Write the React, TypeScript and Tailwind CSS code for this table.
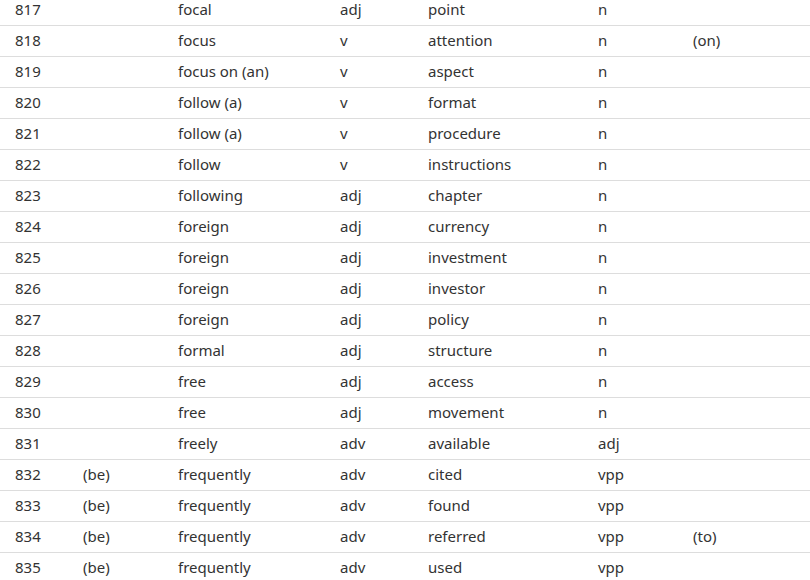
import React from "react"

type Row = [number, string, string, string, string, string, string]

const rows: Row[] = [
  [817, "", "focal", "adj", "point", "n", ""],
  [818, "", "focus", "v", "attention", "n", "(on)"],
  [819, "", "focus on (an)", "v", "aspect", "n", ""],
  [820, "", "follow (a)", "v", "format", "n", ""],
  [821, "", "follow (a)", "v", "procedure", "n", ""],
  [822, "", "follow", "v", "instructions", "n", ""],
  [823, "", "following", "adj", "chapter", "n", ""],
  [824, "", "foreign", "adj", "currency", "n", ""],
  [825, "", "foreign", "adj", "investment", "n", ""],
  [826, "", "foreign", "adj", "investor", "n", ""],
  [827, "", "foreign", "adj", "policy", "n", ""],
  [828, "", "formal", "adj", "structure", "n", ""],
  [829, "", "free", "adj", "access", "n", ""],
  [830, "", "free", "adj", "movement", "n", ""],
  [831, "", "freely", "adv", "available", "adj", ""],
  [832, "(be)", "frequently", "adv", "cited", "vpp", ""],
  [833, "(be)", "frequently", "adv", "found", "vpp", ""],
  [834, "(be)", "frequently", "adv", "referred", "vpp", "(to)"],
  [835, "(be)", "frequently", "adv", "used", "vpp", ""],
]

const App: React.FC = () => {
  return (
    <div className="h-[580px] w-[810px] overflow-hidden bg-white font-['Noto_Sans',sans-serif] text-[15px] text-[#333]">
      <div className="-mt-[5px]">
        {rows.map((row) => (
          <div
            key={row[0]}
            className="grid h-[31px] grid-cols-[68px_95px_162px_88px_170px_95px_1fr] border-b border-[#dddddd]"
          >
            {row.map((cell, i) => (
              <div key={i} className="pb-[2px] pl-[15px] leading-[28px] whitespace-nowrap">
                {cell}
              </div>
            ))}
          </div>
        ))}
      </div>
    </div>
  )
}

export default App
